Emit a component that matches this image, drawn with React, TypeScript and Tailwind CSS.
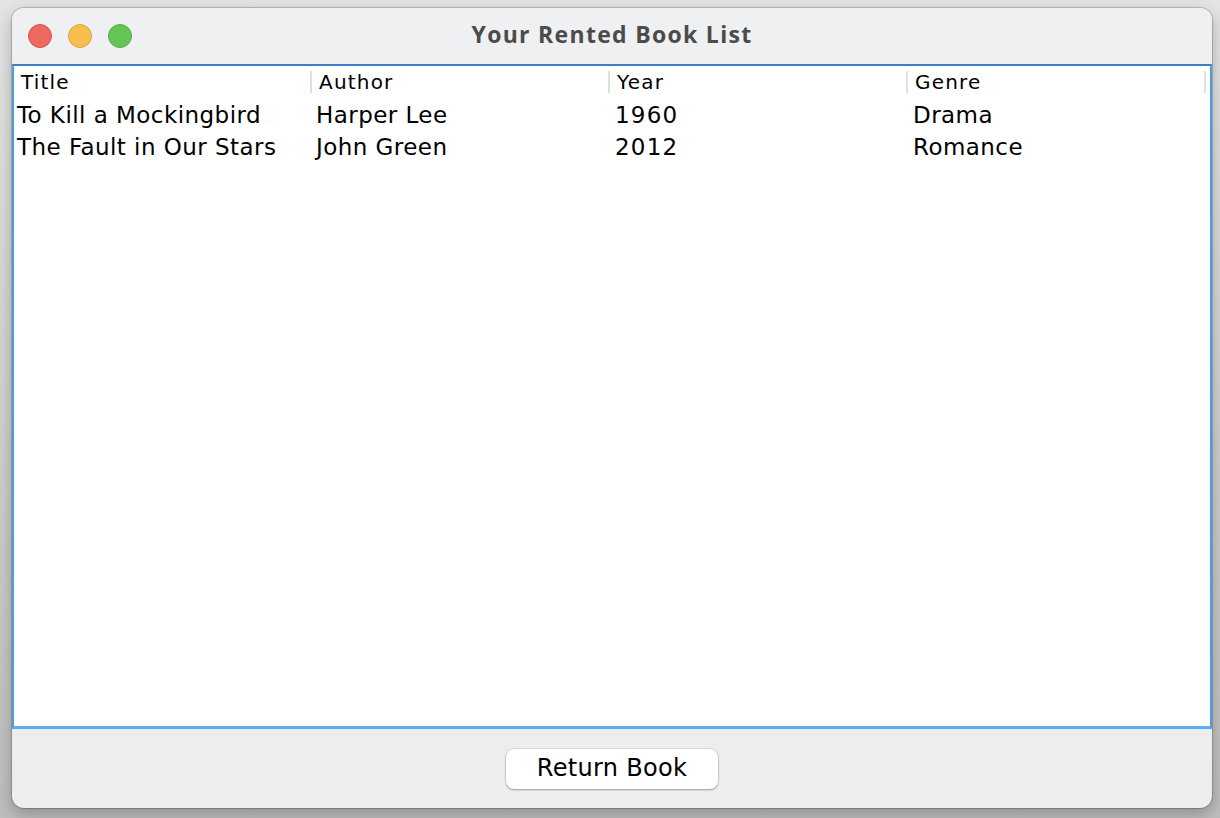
import React from 'react';

const books = [
  { title: 'To Kill a Mockingbird', author: 'Harper Lee', year: '1960', genre: 'Drama' },
  { title: 'The Fault in Our Stars', author: 'John Green', year: '2012', genre: 'Romance' },
];

const columns = ['Title', 'Author', 'Year', 'Genre'];

export default function App() {
  return (
    <div
      className="w-[1220px] h-[818px] bg-gradient-to-b from-[#e4e4e4] to-[#bdbdbd] pt-[8px] pl-[12px]"
      style={{ fontFamily: '"DejaVu Sans", "Noto Sans", sans-serif' }}
    >
      <div className="w-[1200px] h-[800px] rounded-[12px] bg-[#ededed] flex flex-col overflow-hidden shadow-[0_0_0_1px_rgba(0,0,0,0.18),0_6px_16px_rgba(0,0,0,0.25)]">
        {/* title bar */}
        <div className="h-[56px] bg-[#eef0f1] flex items-center relative shrink-0">
          <div className="flex gap-[16px] pl-[16px]">
            <span className="w-[24px] h-[24px] rounded-full bg-[#ee6a5f] border border-[#d8574c]" />
            <span className="w-[24px] h-[24px] rounded-full bg-[#f5be4f] border border-[#dea63b]" />
            <span className="w-[24px] h-[24px] rounded-full bg-[#62c554] border border-[#4fae42]" />
          </div>
          <div
            className="absolute inset-0 flex items-center justify-center pb-[4px] text-[23px] tracking-[1.3px] font-bold text-[#4b4b4b] pointer-events-none"
            style={{ fontFamily: '"Open Sans", "DejaVu Sans", sans-serif' }}
          >
            Your Rented Book List
          </div>
        </div>

        {/* table */}
        <div className="h-[665px] shrink-0 bg-white border-t-2 border-x-2 border-t-[#3b80c7] border-x-[#4f9be0] border-b-[3px] border-b-[#5aaef2]">
          <div className="grid grid-cols-[298px_298px_298px_298px] h-[32px] items-center">
            {columns.map((c) => (
              <div key={c} className="h-[22px] flex items-center border-r-2 border-r-[#e0e0e0] pl-[7px] text-[20px] tracking-[1.2px] text-black">
                {c}
              </div>
            ))}
          </div>
          {books.map((b) => (
            <div key={b.title} className="grid grid-cols-[298px_298px_298px_298px] h-[32px] items-center text-[23px] tracking-[0.45px] text-black">
              <div className="pl-[3px]">{b.title}</div>
              <div className="pl-[4px]">{b.author}</div>
              <div className="pl-[5px] tracking-[1.2px]">{b.year}</div>
              <div className="pl-[5px]">{b.genre}</div>
            </div>
          ))}
        </div>

        {/* footer */}
        <div className="flex-1 flex items-center justify-center">
          <button className="w-[212px] h-[40px] rounded-[8px] bg-white text-[24px] tracking-[0.3px] text-black pb-[2px] shadow-[0_0_0_0.5px_rgba(0,0,0,0.15),0_1px_2px_rgba(0,0,0,0.3)]">
            Return Book
          </button>
        </div>
      </div>
    </div>
  );
}
